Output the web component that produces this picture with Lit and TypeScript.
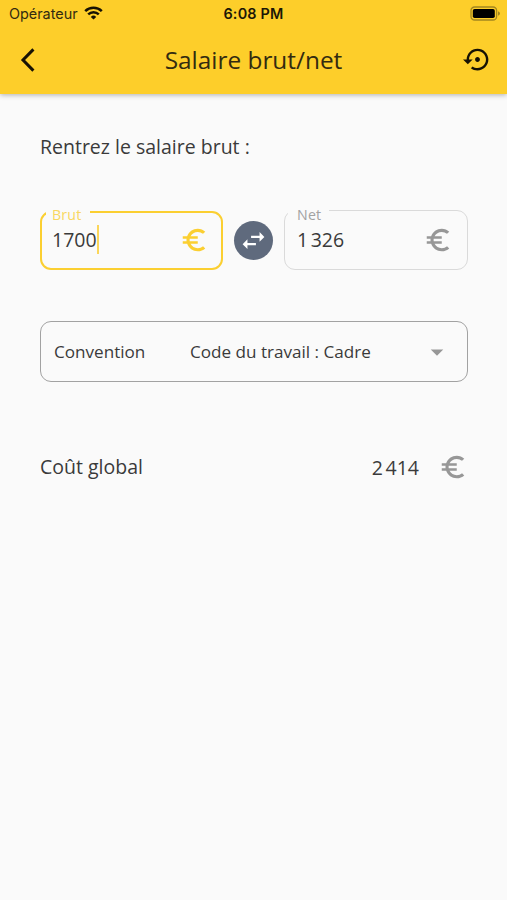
import { LitElement, html, css, svg } from "lit";
import { customElement, property } from "lit/decorators.js";

const ICONS: Record<string, string> = {
  euro: "M15 18.5c-2.51 0-4.68-1.42-5.76-3.5H15v-2H8.58c-.05-.33-.08-.66-.08-1s.03-.67.08-1H15V9H9.24C10.32 6.92 12.5 5.5 15 5.5c1.61 0 3.09.59 4.23 1.57L21 5.3C19.41 3.87 17.3 3 15 3c-3.92 0-7.24 2.51-8.48 6H3v2h3.06c-.04.33-.06.66-.06 1s.02.67.06 1H3v2h3.52c1.24 3.49 4.56 6 8.48 6 2.31 0 4.41-.87 6-2.3l-1.78-1.77c-1.13.98-2.6 1.57-4.22 1.57z",
  swap: "M6.99 11L3 15l3.99 4v-3H14v-2H6.99v-3zM21 9l-3.99-4v3H10v2h7.01v3L21 9z",
  restore:
    "M14 12c0-1.1-.9-2-2-2s-2 .9-2 2 .9 2 2 2 2-.9 2-2zm-2-9c-4.97 0-9 4.03-9 9H0l4 4 4-4H5c0-3.87 3.13-7 7-7s7 3.13 7 7-3.13 7-7 7c-1.51 0-2.91-.49-4.06-1.3l-1.42 1.44C8.04 20.3 9.94 21 12 21c4.97 0 9-4.03 9-9s-4.03-9-9-9z",
  drop: "M7 10l5 5 5-5z",
};

@customElement("ui-icon")
export class UiIcon extends LitElement {
  @property() name = "euro";
  static styles = css`
    :host { display: block; flex: none; width: 30px; height: 30px; }
    svg { display: block; width: 100%; height: 100%; fill: currentColor; }
  `;
  render() {
    return html`<svg viewBox="0 0 24 24">${svg`<path d=${ICONS[this.name]} />`}</svg>`;
  }
}

@customElement("money-field")
export class MoneyField extends LitElement {
  @property() label = "";
  @property() value = "";
  @property({ type: Boolean, reflect: true }) active = false;
  static styles = css`
    :host {
      display: flex; align-items: center; position: relative; box-sizing: border-box;
      height: 60px; border: 1px solid #dadada; border-radius: 11px;
      padding: 0 14px 0 12px; color: #979797;
    }
    :host([active]) { height: 59px; border: 2px solid #fbcf31; padding: 0 12px 0 10px; color: #fbcf31; }
    .label {
      position: absolute; left: 3px; top: -3px; box-sizing: border-box; width: 41px; height: 14px;
      padding-left: 9px; background: #fafafa; font-size: 14.2px; line-height: 14px;
      color: #a2a2a2; letter-spacing: 0.2px;
    }
    :host([active]) .label { left: 4px; top: -5px; width: 44px; padding-left: 6px; color: #f9d75f; }
    .value { font-size: 19.5px; line-height: 28px; color: #3a3a3a; }
    .caret { width: 2px; height: 29px; margin-top: -1px; background: #fbd65a; }
    ui-icon { margin-left: auto; }
  `;
  render() {
    return html`<span class="label">${this.label}</span>
      <span class="value">${this.value}</span>
      ${this.active ? html`<span class="caret"></span>` : ""}
      <ui-icon name="euro"></ui-icon>`;
  }
}

@customElement("app-root")
export class AppRoot extends LitElement {
  static styles = css`
    :host {
      display: block; height: 900px; background: #fafafa; color: #3a3a3a; overflow: hidden;
      font-family: "Open Sans", "Noto Sans", sans-serif;
    }
    header { height: 94px; background: #fdce2a; box-shadow: 0 1px 5px rgba(0, 0, 0, 0.3); color: #332b10; }
    .status {
      display: grid; grid-template-columns: 1fr auto 1fr; align-items: center; height: 27px;
      padding: 0 7px 0 9px; font: 14.4px/27px Inter, sans-serif;
    }
    .carrier { display: flex; align-items: center; gap: 6px; }
    .carrier svg { margin-top: -2px; }
    .time { margin-right: 2px; font-weight: 600; color: #1c1706; letter-spacing: 0.2px; }
    .battery { justify-self: end; display: block; }
    .bar { display: grid; grid-template-columns: 1fr auto 1fr; align-items: center; height: 65px; padding: 0 15px 0 20px; }
    .back { display: block; }
    .title { margin-right: 5px; font-size: 24.4px; line-height: 34px; }
    .bar ui-icon { width: 29px; height: 29px; justify-self: end; color: #171204; }
    main { padding: 39px 39px 0 40px; }
    .prompt { font-size: 19.5px; line-height: 28px; }
    .fields { display: grid; grid-template-columns: 183px 39px 184px; justify-content: space-between; align-items: center; margin-top: 49px; }
    .swap { display: flex; align-items: center; justify-content: center; width: 39px; height: 39px; border-radius: 50%; background: #5f6a7d; color: #fff; }
    .swap ui-icon { width: 29px; height: 29px; }
    .select {
      display: flex; align-items: center; box-sizing: border-box; height: 61px; margin-top: 51px;
      border: 1px solid #a2a2a2; border-radius: 11px; padding: 0 15px 0 13px; font-size: 17.1px;
    }
    .name { width: 136px; }
    .select ui-icon { margin-left: auto; color: #979797; }
    .total { display: flex; align-items: center; margin-top: 70px; height: 30px; font-size: 19.5px; }
    .caption { margin-top: -2px; }
    .amount { margin-left: auto; margin-right: 19px; }
    .total ui-icon { color: #979797; }
  `;
  render() {
    return html`
      <header>
        <div class="status">
          <span class="carrier">Opérateur
            <svg width="19" height="14" viewBox="0 0 19 14" fill="none" stroke="#171204" stroke-width="2.5">
              <path d="M1.2 5.2A11.8 11.8 0 0 1 17.8 5.2" />
              <path d="M4.2 8.3A7.6 7.6 0 0 1 14.8 8.3" />
              <path d="M9.5 13.6L6.8 10.9A3.9 3.9 0 0 1 12.2 10.9Z" fill="#171204" stroke="none" />
            </svg>
          </span>
          <span class="time">6:08 PM</span>
          <svg class="battery" width="30" height="15" viewBox="0 0 30 15">
            <rect x="1" y="1" width="25.6" height="13" rx="3.6" fill="none" stroke="#a38720" stroke-width="1.3" />
            <rect x="2.8" y="2.9" width="22" height="9.2" rx="1.8" fill="#000" />
            <path d="M28 5.2Q30 6 30 7.5T28 9.8Z" fill="#a38720" />
          </svg>
        </div>
        <div class="bar">
          <svg class="back" width="16" height="24" viewBox="0 0 16 24" fill="none" stroke="#171204" stroke-width="3">
            <path d="M13.4 1.4L3 12L13.4 22.6" />
          </svg>
          <span class="title">Salaire brut/net</span>
          <ui-icon name="restore"></ui-icon>
        </div>
      </header>
      <main>
        <div class="prompt">Rentrez le salaire brut :</div>
        <div class="fields">
          <money-field active label="Brut" value="1700"></money-field>
          <div class="swap"><ui-icon name="swap"></ui-icon></div>
          <money-field label="Net" value="1&#8239;326"></money-field>
        </div>
        <div class="select">
          <span class="name">Convention</span>
          <span>Code du travail : Cadre</span>
          <ui-icon name="drop"></ui-icon>
        </div>
        <div class="total">
          <span class="caption">Coût global</span>
          <span class="amount">2&#8239;414</span>
          <ui-icon name="euro"></ui-icon>
        </div>
      </main>
    `;
  }
}
